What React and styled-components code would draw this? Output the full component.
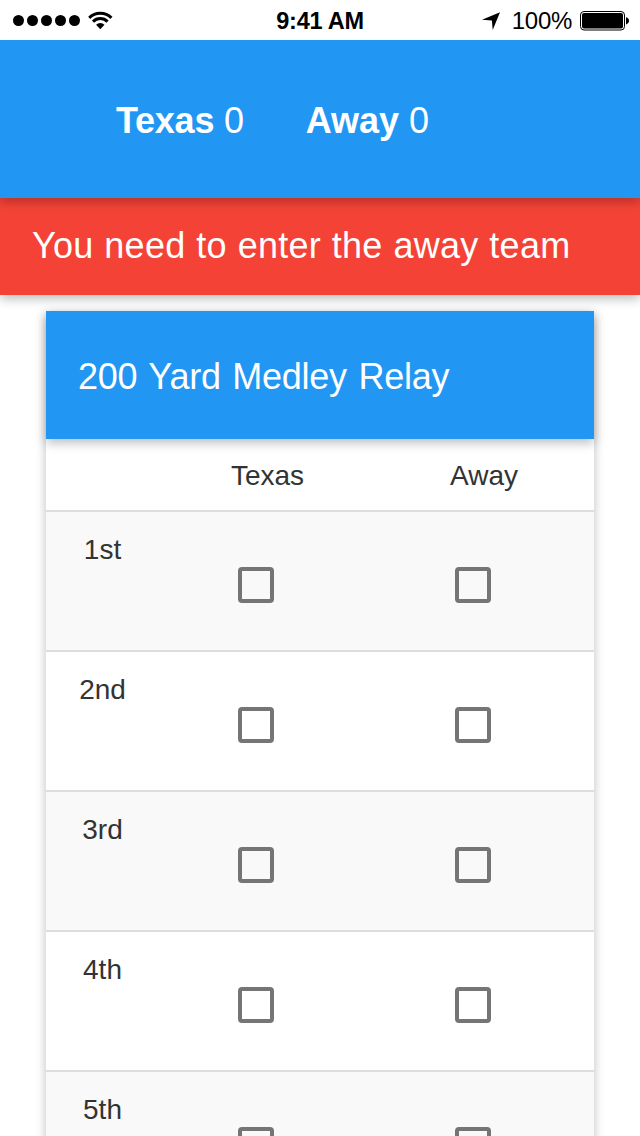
import React from "react";
import styled, { createGlobalStyle } from "styled-components";

const GlobalStyle = createGlobalStyle`
  *, *::before, *::after { box-sizing: border-box; }
  body {
    margin: 0;
    background: #fff;
    color: #333;
    font-family: "Liberation Sans", Arial, Helvetica, sans-serif;
  }
`;

const Screen = styled.div`
  width: 640px;
  height: 1136px;
  overflow: hidden;
  background: #fff;
`;

const StatusBar = styled.div`
  position: relative;
  z-index: 3;
  display: grid;
  grid-template-columns: 1fr auto 1fr;
  align-items: center;
  height: 40px;
  padding: 1px 11px 0 13px;
  background: #fff;
  color: #000;
  font-size: 24px;
  line-height: 37px;
  white-space: nowrap;
`;

const StatusGroup = styled.div`
  display: flex;
  align-items: center;
  justify-content: ${(p) => (p.$end ? "flex-end" : "flex-start")};
  svg { display: block; flex: none; }
`;

const SignalDots = styled.div`
  display: flex;
  gap: 3px;
  margin-right: 7px;
`;

const Dot = styled.span`
  width: 11px;
  height: 11px;
  border-radius: 50%;
  background: #000;
`;

const Clock = styled.span`
  padding: 2px 2px 0 0;
  font-weight: 700;
  font-size: 23.5px;
  letter-spacing: -0.25px;
`;

const BatteryText = styled.span`
  margin: 0 8px 0 12px;
  letter-spacing: -0.3px;
`;

const ScoreBar = styled.header`
  position: relative;
  z-index: 2;
  display: flex;
  align-items: center;
  gap: 62px;
  height: 158px;
  padding: 4px 0 0 116px;
  background: #2196f3;
  color: #fff;
  box-shadow: 0 4px 10px rgba(0, 0, 0, 0.26);
`;

const Score = styled.span`
  font-size: 36px;
  line-height: 42px;
  letter-spacing: ${(p) => p.$tracking}px;
  white-space: nowrap;
`;

const Alert = styled.div`
  position: relative;
  z-index: 1;
  display: flex;
  align-items: center;
  height: 97px;
  padding: 0 32px 1px;
  background: #f44336;
  color: #fff;
  font-size: 36px;
  letter-spacing: 0.25px;
  word-spacing: 0.6px;
  white-space: nowrap;
  box-shadow: 0 4px 10px rgba(0, 0, 0, 0.26);
`;

const Card = styled.section`
  position: relative;
  z-index: 2;
  margin: 16px 46px 0;
  background: #fff;
  box-shadow: 0 4px 10px rgba(0, 0, 0, 0.26);
`;

const CardTitle = styled.h2`
  position: relative;
  display: flex;
  align-items: center;
  height: 128px;
  margin: 0;
  padding: 3px 32px 0;
  background: #2196f3;
  color: #fff;
  font-size: 36px;
  font-weight: 400;
  letter-spacing: -0.27px;
  word-spacing: 2px;
  white-space: nowrap;
  box-shadow: 0 4px 10px rgba(0, 0, 0, 0.26);
`;

const Row = styled.div`
  display: grid;
  grid-template-columns: 113px 217px 216px;
  height: ${(p) => (p.$head ? 71 : 140)}px;
  border-top: ${(p) => (p.$head ? "none" : "2px solid #ddd")};
  background: ${(p) => (p.$striped ? "#f9f9f9" : "#fff")};
  font-size: 28px;
  line-height: 40px;
  text-align: center;
`;

const Label = styled.div`
  padding-top: ${(p) => (p.$head ? 17 : 18)}px;
`;

const CheckCell = styled.div`
  display: flex;
  justify-content: center;
  padding: 55px 23px 0 0;
`;

const Checkbox = styled.button`
  width: 36px;
  height: 36px;
  padding: 0;
  border: 4px solid #757575;
  border-radius: 4px;
  background: transparent;
`;

const places = ["1st", "2nd", "3rd", "4th", "5th"];

function WifiIcon() {
  return (
    <svg width="27" height="19" viewBox="0 0 27 19">
      <path d="M2.2 6.9A15.8 15.8 0 0 1 24.4 6.9" fill="none" stroke="#000" strokeWidth="3" />
      <path d="M6 10.6A10.4 10.4 0 0 1 20.6 10.6" fill="none" stroke="#000" strokeWidth="3" />
      <path d="M9.1 13.8A6 6 0 0 1 17.5 13.8L13.3 18.2Z" fill="#000" />
    </svg>
  );
}

function LocationIcon() {
  return (
    <svg width="18" height="18" viewBox="0 0 18 18">
      <path d="M18 0.3L10.7 17.9L9.9 8.5L0 7.8Z" fill="#000" />
    </svg>
  );
}

function BatteryIcon() {
  return (
    <svg width="49" height="20" viewBox="0 0 49 20">
      <rect x="0.5" y="0.5" width="44" height="18.5" rx="3.5" fill="none" stroke="#000" />
      <rect x="2" y="2" width="41" height="15.5" rx="2" fill="#000" />
      <path d="M46 6.2Q49 7 49 9.8T46 13.4Z" fill="#000" />
    </svg>
  );
}

export default function App() {
  return (
    <>
      <GlobalStyle />
      <Screen>
        <StatusBar>
          <StatusGroup>
            <SignalDots>
              {[0, 1, 2, 3, 4].map((i) => <Dot key={i} />)}
            </SignalDots>
            <WifiIcon />
          </StatusGroup>
          <Clock>9:41 AM</Clock>
          <StatusGroup $end>
            <LocationIcon />
            <BatteryText>100%</BatteryText>
            <BatteryIcon />
          </StatusGroup>
        </StatusBar>
        <ScoreBar>
          <Score $tracking={-0.25}><b>Texas</b> 0</Score>
          <Score $tracking={0}><b>Away</b> 0</Score>
        </ScoreBar>
        <Alert role="alert">You need to enter the away team</Alert>
        <Card>
          <CardTitle>200 Yard Medley Relay</CardTitle>
          <Row $head>
            <Label $head />
            <Label $head>Texas</Label>
            <Label $head>Away</Label>
          </Row>
          {places.map((place, i) => (
            <Row key={place} $striped={i % 2 === 0}>
              <Label>{place}</Label>
              <CheckCell><Checkbox aria-label={`${place} Texas`} /></CheckCell>
              <CheckCell><Checkbox aria-label={`${place} Away`} /></CheckCell>
            </Row>
          ))}
        </Card>
      </Screen>
    </>
  );
}
